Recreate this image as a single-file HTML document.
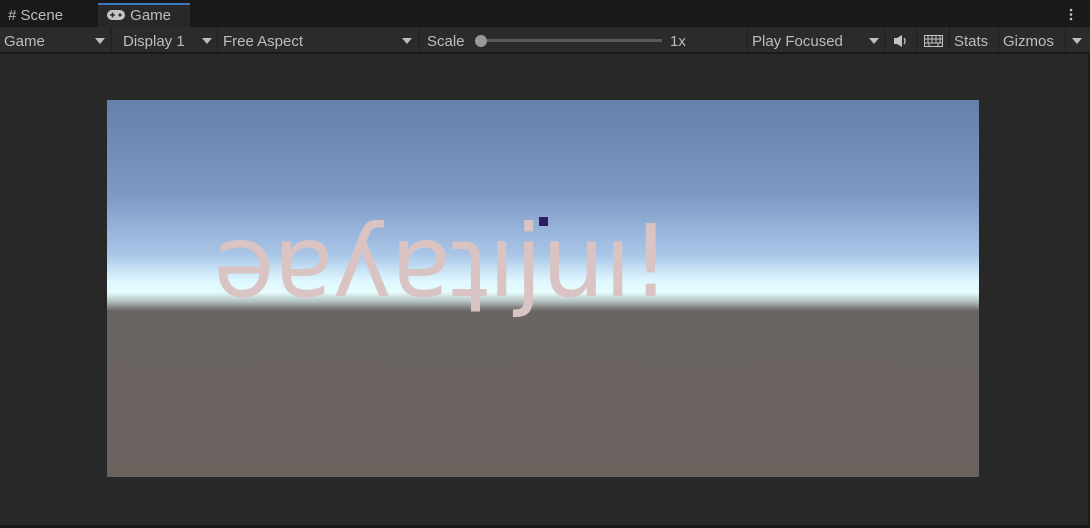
<!DOCTYPE html>
<html><head><meta charset="utf-8"><style>
*{margin:0;padding:0;box-sizing:border-box}
body{width:1090px;height:528px;background:#191919;font-family:"Liberation Sans","DejaVu Sans",sans-serif;font-size:15px;color:#bdbdbd;position:relative;overflow:hidden}
.tabs{position:absolute;left:0;top:0;width:1090px;height:27px;background:#191919}
.tab{position:absolute;top:3px;height:24px;line-height:25px;padding-left:8px}
.t1{left:0;width:94px}
.t2{left:98px;width:92px;background:#282828;border-top:2px solid #3a79bb;line-height:22px}
.bar{position:absolute;left:0;top:27px;width:1090px;height:26px;background:#2b2b2b;border-bottom:1px solid #1a1a1a}
.it{position:absolute;top:0;height:25px;line-height:29px;padding-left:4px;border-right:1px solid #1f1f1f}
.arr{position:absolute;top:11px;width:0;height:0;border-left:5px solid transparent;border-right:5px solid transparent;border-top:6px solid #bdbdbd}
.main{position:absolute;left:0;top:54px;width:1088px;height:471px;background:#282828}
.view{position:absolute;left:107px;top:100px;width:872px;height:377px;overflow:hidden;
background:linear-gradient(180deg,#6580aa 0%,#7d99c4 25%,#a9c6e8 41%,#dff7ff 48%,#e6fcfc 51%,#b0bfbf 53.5%,#858483 55%,#6a6462 56%,#6a625d 100%)}
.txt{position:absolute;left:106px;top:92px;font-size:100px;line-height:140px;color:#d9c3c3;letter-spacing:-1px;white-space:nowrap;font-family:"DejaVu Sans","Liberation Sans",sans-serif}
.dot{position:absolute;left:432px;top:117px;width:9px;height:9px;background:#2e1d60}
</style></head><body>
<div class="tabs">
<div class="tab t1"># Scene</div>
<div class="tab t2"><svg width="20" height="12" style="vertical-align:-1px" viewBox="0 0 20 12"><rect x="1" y="1" width="18" height="10" rx="5" fill="#c4c4c4"/><rect x="4" y="5.3" width="5" height="1.4" fill="#282828"/><rect x="5.8" y="3.5" width="1.4" height="5" fill="#282828"/><circle cx="14" cy="6" r="1.5" fill="#282828"/></svg> Game</div>
<svg style="position:absolute;left:1069px;top:8px" width="4" height="13"><circle cx="2" cy="2" r="1.3" fill="#c4c4c4"/><circle cx="2" cy="6.5" r="1.3" fill="#c4c4c4"/><circle cx="2" cy="11" r="1.3" fill="#c4c4c4"/></svg>
</div>
<div class="bar">
<div class="it" style="left:0;width:112px">Game<span class="arr" style="left:95px"></span></div>
<div class="it" style="left:112px;width:106px;padding-left:11px">Display 1<span class="arr" style="left:90px"></span></div>
<div class="it" style="left:218px;width:202px;padding-left:5px">Free Aspect<span class="arr" style="left:184px"></span></div>
<div class="it" style="left:420px;width:328px;padding-left:7px">Scale
<span style="position:absolute;left:56px;top:12px;width:186px;height:3px;background:#5a5a5a"></span>
<span style="position:absolute;left:55px;top:8px;width:12px;height:12px;border-radius:50%;background:#999"></span>
<span style="position:absolute;left:250px">1x</span></div>
<div class="it" style="left:748px;width:137px">Play Focused<span class="arr" style="left:121px"></span></div>
<div class="it" style="left:885px;width:32px;padding-left:8px"><svg width="16" height="14" viewBox="0 0 16 14" style="vertical-align:-2px"><rect x="1" y="4" width="3" height="6" fill="#c4c4c4"/><path d="M4 4 L9 1 V13 L4 10 Z" fill="#c4c4c4"/><path d="M11 4 Q13 7 11 10" stroke="#c4c4c4" stroke-width="1.3" fill="none"/></svg></div>
<div class="it" style="left:917px;width:33px;padding-left:7px"><svg width="19" height="12" viewBox="0 0 19 12" style="vertical-align:-1px"><rect x="0.5" y="0.5" width="18" height="11" fill="none" stroke="#c4c4c4"/><path d="M0 4H19M0 8H19M4 0V8M8 0V8M12 0V8M16 0V8M5 8V12M14 8V12" stroke="#c4c4c4"/></svg></div>
<div class="it" style="left:950px;width:49px">Stats</div>
<div class="it" style="left:999px;width:67px">Gizmos</div>
<div class="it" style="left:1066px;width:24px;border:none"><span class="arr" style="left:6px"></span></div>
</div>
<div class="main"></div>
<div class="view">
<div class="txt">əɐʎɐʇıjuı!</div>
<div class="dot"></div>
</div>
</body></html>
